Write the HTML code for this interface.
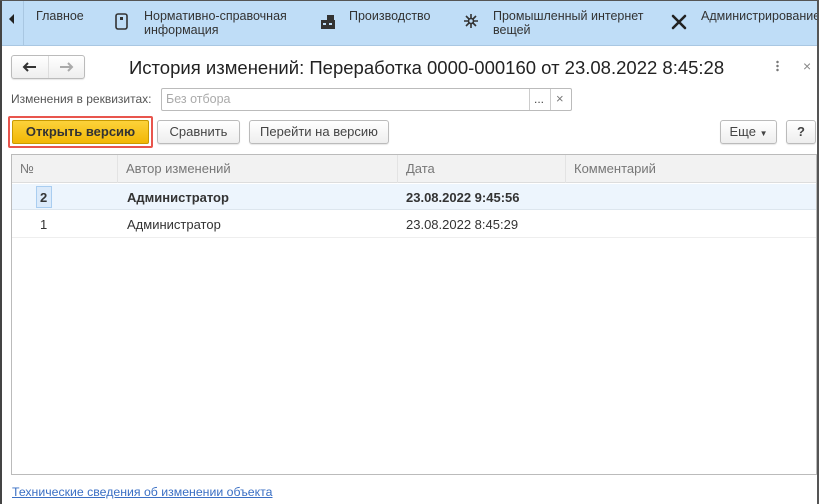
<!DOCTYPE html>
<html><head><meta charset="utf-8"><style>
*{box-sizing:border-box;margin:0;padding:0}
body{width:819px;height:504px;overflow:hidden;background:#fff;font-family:"Liberation Sans",sans-serif;font-size:13px;color:#333;position:relative}
.abs{position:absolute}
.top{left:0;top:0;width:819px;height:46px;background:#bfddf7;border-bottom:1px solid #a9c7e2}
.lb{left:0;top:0;width:2px;height:504px;background:#444}
.rb{left:817px;top:0;width:2px;height:504px;background:#555}
.tb{left:0;top:0;width:819px;height:1px;background:#555}
.nav{font-size:12.5px;color:#333;line-height:14px}
.btn{border:1px solid #bbb;border-radius:3px;background:linear-gradient(#fff,#eee);font-size:13px;color:#444;text-align:center;line-height:22px;box-shadow:0 1px 1px rgba(0,0,0,.1)}
.th{top:155px;height:28px;line-height:28px;color:#777;border-right:1px solid #e3e3e3;padding-left:8px}
</style></head><body>
<div class="abs top"></div>
<div class="abs" style="left:23px;top:0;width:1px;height:46px;background:#a9c7e2"></div>
<div class="abs" style="left:9px;top:14px;width:0;height:0;border-top:5px solid transparent;border-bottom:5px solid transparent;border-right:5px solid #222"></div>
<div class="abs nav" style="left:36px;top:9px">Главное</div>
<svg class="abs" style="left:115px;top:13px" width="14" height="17"><rect x="1" y="1" width="11" height="15" rx="2" fill="none" stroke="#333" stroke-width="1.6"/><rect x="5" y="4" width="3" height="3" fill="#333"/></svg>
<div class="abs nav" style="left:144px;top:9px">Нормативно-справочная<br>информация</div>
<svg class="abs" style="left:320px;top:13px" width="16" height="17"><rect x="1" y="7" width="14" height="9" fill="#333"/><rect x="7" y="2" width="7" height="6" fill="#333"/><rect x="3" y="10" width="3" height="2" fill="#bfddf7"/><rect x="9" y="10" width="3" height="2" fill="#bfddf7"/></svg>
<div class="abs nav" style="left:349px;top:9px">Производство</div>
<svg class="abs" style="left:463px;top:13px" width="16" height="16" stroke="#333" stroke-width="1.6"><path d="M8 1V15M1 8H15M3 3L13 13M13 3L3 13"/><circle cx="8" cy="8" r="2.5" fill="#bfddf7"/></svg>
<div class="abs nav" style="left:493px;top:9px">Промышленный интернет<br>вещей</div>
<svg class="abs" style="left:670px;top:13px" width="18" height="18" stroke="#222" stroke-width="2.6" stroke-linecap="round"><path d="M3 3L15 15M15 3L3 15"/></svg>
<div class="abs nav" style="left:701px;top:9px;white-space:nowrap">Администрирование</div>

<div class="abs btn" style="left:11px;top:55px;width:74px;height:24px"></div>
<div class="abs" style="left:48px;top:56px;width:1px;height:22px;background:#ddd"></div>
<svg class="abs" style="left:22px;top:61px" width="16" height="12"><path d="M2 6H14M6 2L2 6L6 10" stroke="#333" stroke-width="2" fill="none"/></svg>
<svg class="abs" style="left:58px;top:61px" width="16" height="12"><path d="M2 6H14M10 2L14 6L10 10" stroke="#aaa" stroke-width="2" fill="none"/></svg>
<div class="abs" style="left:129px;top:57px;font-size:18.5px;color:#222;white-space:nowrap">История изменений: Переработка 0000-000160 от 23.08.2022 8:45:28</div>
<div class="abs" style="left:776px;top:60px;width:3px;height:12px;background:radial-gradient(circle,#777 1px,transparent 1.5px) 0 0/3px 4px"></div>
<div class="abs" style="left:803px;top:58px;color:#888;font-size:14px">×</div>

<div class="abs" style="left:11px;top:92px;color:#555;font-size:12px">Изменения в реквизитах:</div>
<div class="abs" style="left:161px;top:88px;width:411px;height:23px;border:1px solid #bbb;border-radius:2px"></div>
<div class="abs" style="left:166px;top:92px;color:#aaa;font-size:12.5px">Без отбора</div>
<div class="abs" style="left:529px;top:89px;width:1px;height:21px;background:#ccc"></div>
<div class="abs" style="left:550px;top:89px;width:1px;height:21px;background:#ccc"></div>
<div class="abs" style="left:534px;top:92px;color:#444;font-size:12px">...</div>
<div class="abs" style="left:556px;top:91px;color:#777;font-size:13px">×</div>

<div class="abs" style="left:8px;top:116px;width:145px;height:32px;border:2px solid #e8554d;border-radius:2px"></div>
<div class="abs" style="left:12px;top:120px;width:137px;height:24px;background:linear-gradient(#fcd23a,#f2b705);border:1px solid #c99a00;border-radius:2px;text-align:center;line-height:22px;font-weight:bold;color:#333;font-size:13px">Открыть версию</div>
<div class="abs btn" style="left:157px;top:120px;width:83px;height:24px">Сравнить</div>
<div class="abs btn" style="left:249px;top:120px;width:140px;height:24px">Перейти на версию</div>
<div class="abs btn" style="left:720px;top:120px;width:57px;height:24px">Еще <span style="font-size:8px">▼</span></div>
<div class="abs btn" style="left:786px;top:120px;width:30px;height:24px;font-weight:bold">?</div>

<div class="abs" style="left:11px;top:154px;width:806px;height:321px;border:1px solid #bbb"></div>
<div class="abs" style="left:12px;top:155px;width:804px;height:28px;background:#f2f2f2;border-bottom:1px solid #ddd"></div>
<div class="abs th" style="left:12px;width:106px">№</div>
<div class="abs th" style="left:118px;width:280px">Автор изменений</div>
<div class="abs th" style="left:398px;width:168px">Дата</div>
<div class="abs th" style="left:566px;width:250px;border:none">Комментарий</div>
<div class="abs" style="left:12px;top:184px;width:804px;height:26px;background:#edf5fd;border-bottom:1px solid #dde6ee"></div>
<div class="abs" style="left:36px;top:186px;width:16px;height:22px;border:1px solid #a9cdf0;background:#dbeafa"></div>
<div class="abs" style="left:40px;top:190px;font-weight:bold;color:#333">2</div>
<div class="abs" style="left:127px;top:190px;font-weight:bold;color:#333">Администратор</div>
<div class="abs" style="left:406px;top:190px;font-weight:bold;color:#333">23.08.2022 9:45:56</div>
<div class="abs" style="left:12px;top:237px;width:804px;height:1px;background:#eee"></div>
<div class="abs" style="left:40px;top:217px">1</div>
<div class="abs" style="left:127px;top:217px">Администратор</div>
<div class="abs" style="left:406px;top:217px">23.08.2022 8:45:29</div>

<div class="abs" style="left:12px;top:485px;color:#3a6fc4;text-decoration:underline;font-size:12.3px">Технические сведения об изменении объекта</div>
<div class="abs lb"></div><div class="abs rb"></div><div class="abs tb"></div>
</body></html>
